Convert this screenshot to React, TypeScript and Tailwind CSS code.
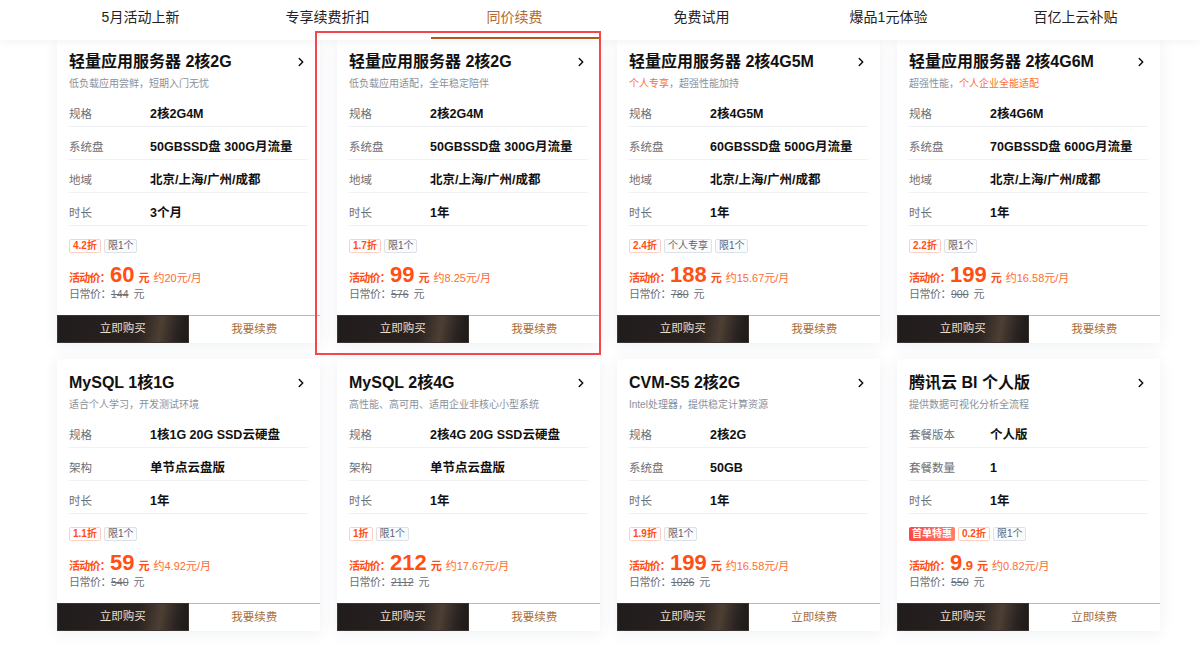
import React from "react";
import { ChevronRight } from "lucide-react";

type Tag = { text: string; kind: "off" | "plain" | "hot" };

type Product = {
  title: string;
  sub: React.ReactNode;
  specs: [string, string][];
  tags: Tag[];
  price: string;
  priceDec?: string;
  monthly: string;
  orig: string;
  renew: string;
};

const TABS = ["5月活动上新", "专享续费折扣", "同价续费", "免费试用", "爆品1元体验", "百亿上云补贴"];

const REGION = "北京/上海/广州/成都";

const PRODUCTS: Product[] = [
  {
    title: "轻量应用服务器 2核2G",
    sub: "低负载应用尝鲜，短期入门无忧",
    specs: [
      ["规格", "2核2G4M"],
      ["系统盘", "50GBSSD盘 300G月流量"],
      ["地域", REGION],
      ["时长", "3个月"],
    ],
    tags: [
      { text: "4.2折", kind: "off" },
      { text: "限1个", kind: "plain" },
    ],
    price: "60",
    monthly: "约20元/月",
    orig: "144",
    renew: "我要续费",
  },
  {
    title: "轻量应用服务器 2核2G",
    sub: "低负载应用适配，全年稳定陪伴",
    specs: [
      ["规格", "2核2G4M"],
      ["系统盘", "50GBSSD盘 300G月流量"],
      ["地域", REGION],
      ["时长", "1年"],
    ],
    tags: [
      { text: "1.7折", kind: "off" },
      { text: "限1个", kind: "plain" },
    ],
    price: "99",
    monthly: "约8.25元/月",
    orig: "576",
    renew: "我要续费",
  },
  {
    title: "轻量应用服务器 2核4G5M",
    sub: (
      <>
        <span className="text-[#ff6a2a]">个人专享</span>，超强性能加持
      </>
    ),
    specs: [
      ["规格", "2核4G5M"],
      ["系统盘", "60GBSSD盘 500G月流量"],
      ["地域", REGION],
      ["时长", "1年"],
    ],
    tags: [
      { text: "2.4折", kind: "off" },
      { text: "个人专享", kind: "plain" },
      { text: "限1个", kind: "plain" },
    ],
    price: "188",
    monthly: "约15.67元/月",
    orig: "780",
    renew: "我要续费",
  },
  {
    title: "轻量应用服务器 2核4G6M",
    sub: (
      <>
        超强性能，<span className="text-[#ff6a2a]">个人企业全能适配</span>
      </>
    ),
    specs: [
      ["规格", "2核4G6M"],
      ["系统盘", "70GBSSD盘 600G月流量"],
      ["地域", REGION],
      ["时长", "1年"],
    ],
    tags: [
      { text: "2.2折", kind: "off" },
      { text: "限1个", kind: "plain" },
    ],
    price: "199",
    monthly: "约16.58元/月",
    orig: "900",
    renew: "我要续费",
  },
  {
    title: "MySQL 1核1G",
    sub: "适合个人学习，开发测试环境",
    specs: [
      ["规格", "1核1G 20G SSD云硬盘"],
      ["架构", "单节点云盘版"],
      ["时长", "1年"],
    ],
    tags: [
      { text: "1.1折", kind: "off" },
      { text: "限1个", kind: "plain" },
    ],
    price: "59",
    monthly: "约4.92元/月",
    orig: "540",
    renew: "我要续费",
  },
  {
    title: "MySQL 2核4G",
    sub: "高性能、高可用、适用企业非核心小型系统",
    specs: [
      ["规格", "2核4G 20G SSD云硬盘"],
      ["架构", "单节点云盘版"],
      ["时长", "1年"],
    ],
    tags: [
      { text: "1折", kind: "off" },
      { text: "限1个", kind: "plain" },
    ],
    price: "212",
    monthly: "约17.67元/月",
    orig: "2112",
    renew: "我要续费",
  },
  {
    title: "CVM-S5 2核2G",
    sub: "Intel处理器，提供稳定计算资源",
    specs: [
      ["规格", "2核2G"],
      ["系统盘", "50GB"],
      ["时长", "1年"],
    ],
    tags: [
      { text: "1.9折", kind: "off" },
      { text: "限1个", kind: "plain" },
    ],
    price: "199",
    monthly: "约16.58元/月",
    orig: "1026",
    renew: "立即续费",
  },
  {
    title: "腾讯云 BI 个人版",
    sub: "提供数据可视化分析全流程",
    specs: [
      ["套餐版本", "个人版"],
      ["套餐数量", "1"],
      ["时长", "1年"],
    ],
    tags: [
      { text: "首单特惠", kind: "hot" },
      { text: "0.2折", kind: "off" },
      { text: "限1个", kind: "plain" },
    ],
    price: "9",
    priceDec: ".9",
    monthly: "约0.82元/月",
    orig: "550",
    renew: "立即续费",
  },
];

function TagChip({ tag }: { tag: Tag }) {
  if (tag.kind === "hot") {
    return (
      <span className="flex h-[14px] items-center rounded-[2px] bg-gradient-to-r from-[#ff4444] to-[#ff7e6c] px-[3px] text-[10px] font-bold leading-none text-white">
        {tag.text}
      </span>
    );
  }
  if (tag.kind === "off") {
    return (
      <span className="flex h-[14px] items-center rounded-[2px] border border-[#ffd0c2] bg-white px-[3px] text-[10px] font-bold leading-none text-[#ff4f14]">
        {tag.text}
      </span>
    );
  }
  return (
    <span className="flex h-[14px] items-center rounded-[2px] border border-[#dce1ea] bg-[#fafbfc] px-[3px] text-[10px] leading-none text-[#5b6170]">
      {tag.text}
    </span>
  );
}

function ProductCard({ p }: { p: Product }) {
  return (
    <div className="flex flex-col bg-white shadow-[0_2px_14px_rgba(40,60,100,0.08)]">
      <div className="px-3">
        <div className="flex items-center justify-between pt-[14px]">
          <h3 className="text-[16px] font-bold leading-[20px] text-[#111]">{p.title}</h3>
          <ChevronRight size={14} strokeWidth={2.6} className="text-[#111]" />
        </div>
        <p className="mt-[5px] text-[10px] leading-[14px] text-[#8a909b]">{p.sub}</p>

        <div className="mt-[3px]">
          {p.specs.map(([label, value]) => (
            <div
              key={label}
              className="flex border-b border-[#f0f1f4] pt-[12px] pb-[4px] leading-[16px]"
            >
              <span className="w-[81px] shrink-0 text-[11.5px] text-[#6b6f78]">{label}</span>
              <span className="text-[12.5px] font-bold text-[#111]">{value}</span>
            </div>
          ))}
        </div>

        <div className="mt-[13px] flex gap-[3px]">
          {p.tags.map((t) => (
            <TagChip key={t.text} tag={t} />
          ))}
        </div>

        <div className="mt-[11px] flex h-[22px] items-baseline leading-[22px] text-[#ff4f14]">
          <span className="text-[11px] font-bold tracking-[-0.75px]">活动价：</span>
          <span className="text-[22px] font-bold">{p.price}</span>
          {p.priceDec && <span className="text-[13px] font-bold">{p.priceDec}</span>}
          <span className="ml-[4px] text-[11px] font-bold">元</span>
          <span className="ml-[4px] text-[11px] text-[#ff6a33]">{p.monthly}</span>
        </div>

        <div className="mt-[1px] flex items-baseline text-[11px] leading-[14px] text-[#6b6f78]">
          <span className="tracking-[-0.5px]">日常价：</span>
          <span className="text-[10.5px] line-through">{p.orig}</span>
          <span className="ml-[5px]">元</span>
        </div>
      </div>

      <div className="mt-[14px] flex h-[28px]">
        <button className="flex w-1/2 items-center justify-center border border-[#3a3330] bg-[linear-gradient(100deg,#201c1b_0%,#2a2422_62%,#4d3f33_78%,#2a2422_90%,#1d1918_100%)] text-[11.5px] text-[#f0dcc6]">
          立即购买
        </button>
        <button className="flex w-1/2 items-center justify-center border-t border-[#d4b39c] bg-white text-[11.5px] text-[#a86f3e]">
          {p.renew}
        </button>
      </div>
    </div>
  );
}

export default function App() {
  return (
    <div className="relative min-h-[656px] overflow-hidden bg-white font-['Liberation_Sans','Noto_Sans_CJK_SC',sans-serif]">
      <nav className="relative z-10 flex h-[40px] bg-white pl-[47px] shadow-[0_2px_8px_rgba(30,40,70,0.05)]">
        {TABS.map((t, i) => (
          <div key={t} className="relative flex w-[187px] justify-center">
            <span
              className={
                i === 2
                  ? "pt-[7px] text-[14px] leading-[20px] text-[#b8692f]"
                  : "pt-[7px] text-[14px] leading-[20px] text-[#222]"
              }
            >
              {t}
            </span>
            {i === 2 && (
              <span className="absolute bottom-[1px] left-1/2 h-[2px] w-[168px] -translate-x-1/2 bg-[#b5561c]" />
            )}
          </div>
        ))}
      </nav>

      <main className="-mt-[2px] grid grid-cols-[repeat(4,263px)] gap-x-[17px] gap-y-[16px] pl-[57px] pb-6">
        {PRODUCTS.map((p, i) => (
          <ProductCard key={i} p={p} />
        ))}
      </main>

      <div className="pointer-events-none absolute left-[315px] top-[31px] z-20 h-[324px] w-[286px] border-2 border-[#f5474b]" />
    </div>
  );
}
